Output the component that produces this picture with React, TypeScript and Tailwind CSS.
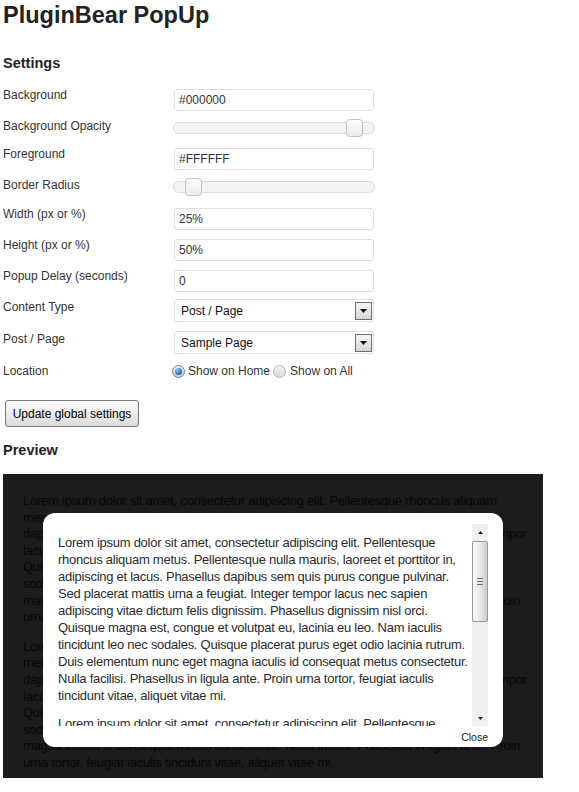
import clsx from 'clsx';

const lorem =
  'Lorem ipsum dolor sit amet, consectetur adipiscing elit. Pellentesque rhoncus aliquam metus. Pellentesque nulla mauris, laoreet et porttitor in, adipiscing et lacus. Phasellus dapibus sem quis purus congue pulvinar. Sed placerat mattis urna a feugiat. Integer tempor lacus nec sapien adipiscing vitae dictum felis dignissim. Phasellus dignissim nisl orci. Quisque magna est, congue et volutpat eu, lacinia eu leo. Nam iaculis tincidunt leo nec sodales. Quisque placerat purus eget odio lacinia rutrum. Duis elementum nunc eget magna iaculis id consequat metus consectetur. Nulla facilisi. Phasellus in ligula ante. Proin urna tortor, feugiat iaculis tincidunt vitae, aliquet vitae mi.';

const TextField = ({ value }: { value: string }) => (
  <input
    readOnly
    value={value}
    className="h-[22px] w-[200px] rounded-[3px] border border-[#dfdfdf] bg-white px-[4px] text-[12px] text-[#333] outline-none"
  />
);

const Slider = ({ high }: { high?: boolean }) => (
  <div className="relative -ml-px h-[12px] w-[202px] rounded-full border border-[#dcdcdc] bg-[#f4f4f4]">
    <div
      className={clsx(
        'absolute top-[-4px] h-[18px] w-[17px] rounded-[4px] border border-[#c2c2c2] bg-linear-to-b from-white to-[#ebebeb]',
        high ? 'left-[172px]' : 'left-[11px]'
      )}
    />
  </div>
);

const DownArrow = () => (
  <svg width="7" height="4" viewBox="0 0 7 4">
    <path d="M0 0H7L3.5 4Z" fill="#111" />
  </svg>
);

const SelectBox = ({ value }: { value: string }) => (
  <div className="flex h-[23px] w-[200px] items-center justify-between rounded-[3px] border border-[#dfdfdf] bg-white pl-[6px] pr-[1px] text-[12px] text-[#111]">
    <span>{value}</span>
    <span className="flex h-[18px] w-[17px] items-center justify-center border border-[#6e6e6e] bg-linear-to-b from-[#f6f6f6] to-[#d6d6d6]">
      <DownArrow />
    </span>
  </div>
);

const Radio = ({ checked }: { checked?: boolean }) => (
  <span
    className={clsx(
      'flex h-[13px] w-[13px] items-center justify-center rounded-full border',
      checked
        ? 'border-[#7f8386] bg-linear-to-b from-[#eef0f2] to-[#c9cdd0]'
        : 'border-[#b4b4b4] bg-linear-to-b from-[#f4f4f4] to-[#d8d8d8]'
    )}
  >
    {checked && (
      <span className="h-[7px] w-[7px] rounded-full bg-[radial-gradient(circle_at_35%_30%,#8fd0ff,#2a7cc4_55%,#164f8a)]" />
    )}
  </span>
);

const Row = ({
  label,
  height,
  pad,
  children,
}: {
  label: string;
  height: string;
  pad: string;
  children: React.ReactNode;
}) => (
  <div className={clsx('flex', height)}>
    <div className="w-[171px] pt-[5px] text-[12px] leading-[14px] text-[#333]">{label}</div>
    <div className={pad}>{children}</div>
  </div>
);

const Scrollbar = () => (
  <div className="flex w-[16px] flex-col bg-[#f0f0f0]">
    <div className="flex h-[17px] items-center justify-center">
      <svg width="5" height="3" viewBox="0 0 5 3">
        <path d="M0 3H5L2.5 0Z" fill="#222" />
      </svg>
    </div>
    <div className="flex h-[81px] flex-col items-center justify-center gap-[2px] rounded-[2px] border border-[#9a9a9a] bg-linear-to-r from-[#fbfbfb] via-[#e8e8e8] to-[#cdcdcd]">
      <span className="h-px w-[6px] bg-[#6a6a6a]" />
      <span className="h-px w-[6px] bg-[#6a6a6a]" />
      <span className="h-px w-[6px] bg-[#6a6a6a]" />
    </div>
    <div className="flex-1" />
    <div className="flex h-[16px] items-center justify-center">
      <svg width="5" height="3" viewBox="0 0 5 3">
        <path d="M0 0H5L2.5 3Z" fill="#222" />
      </svg>
    </div>
  </div>
);

export default function App() {
  return (
    <div className="flex min-h-[792px] flex-col bg-white px-[3px] font-['Liberation_Sans',Arial,sans-serif] text-[#333]">
      <h1 className="text-[23.5px] font-bold leading-[31px] text-[#222]">PluginBear PopUp</h1>

      <h3 className="mt-[23px] text-[14.5px] font-bold leading-[18px] text-[#222]">Settings</h3>

      <div className="mt-[11px] flex flex-col">
        <Row label="Background" height="h-[31px]" pad="pt-[4px]">
          <TextField value="#000000" />
        </Row>
        <Row label="Background Opacity" height="h-[28px]" pad="pt-[8px]">
          <Slider high />
        </Row>
        <Row label="Foreground" height="h-[31px]" pad="pt-[4px]">
          <TextField value="#FFFFFF" />
        </Row>
        <Row label="Border Radius" height="h-[29px]" pad="pt-[8px]">
          <Slider />
        </Row>
        <Row label="Width (px or %)" height="h-[31px]" pad="pt-[4px]">
          <TextField value="25%" />
        </Row>
        <Row label="Height (px or %)" height="h-[31px]" pad="pt-[4px]">
          <TextField value="50%" />
        </Row>
        <Row label="Popup Delay (seconds)" height="h-[31px]" pad="pt-[4px]">
          <TextField value="0" />
        </Row>
        <Row label="Content Type" height="h-[32px]" pad="pt-[4px]">
          <SelectBox value="Post / Page" />
        </Row>
        <Row label="Post / Page" height="h-[32px]" pad="pt-[4px]">
          <SelectBox value="Sample Page" />
        </Row>
        <Row label="Location" height="h-[26px]" pad="pt-[6px]">
          <div className="-ml-[2px] flex items-center text-[12px] leading-[13px] text-[#333]">
            <Radio checked />
            <span className="ml-[3px]">Show on Home</span>
            <span className="ml-[3px]">
              <Radio />
            </span>
            <span className="ml-[4px]">Show on All</span>
          </div>
        </Row>
      </div>

      <button className="ml-[2px] mt-[15px] h-[27px] w-[134px] self-start rounded-[3px] border border-[#7a7a7a] bg-linear-to-b from-white to-[#dadada] text-[12px] text-black">
        Update global settings
      </button>

      <h3 className="mt-[14px] text-[14.5px] font-bold leading-[18px] text-[#222]">Preview</h3>

      {/* preview: page behind the dark overlay, popup on top */}
      <div className="relative mt-[15px] h-[304px] w-[540px] overflow-hidden bg-[#1c1c1c] pl-[20px] pr-[13px] pt-[19px] text-[13px] leading-[16.6px] tracking-[-0.24px] text-[#080808]">
        <p>{lorem}</p>
        <p className="mt-[13px]">{lorem}</p>

        <div className="absolute left-[40px] top-[39px] flex h-[234px] w-[460px] flex-col rounded-[12px] bg-white px-[15px] pb-[3px] pt-[11px] text-[#2b2b2b]">
          <div className="flex h-[202px]">
            <div className="w-[414px] overflow-hidden pt-[10px] text-[13px] leading-[17px] tracking-[-0.26px]">
              <p>{lorem}</p>
              <p className="mt-[11px]">{lorem}</p>
            </div>
            <Scrollbar />
          </div>
          <div className="pt-[5px] text-right text-[10.5px] leading-[13px] tracking-normal text-[#222]">Close</div>
        </div>
      </div>
    </div>
  );
}
